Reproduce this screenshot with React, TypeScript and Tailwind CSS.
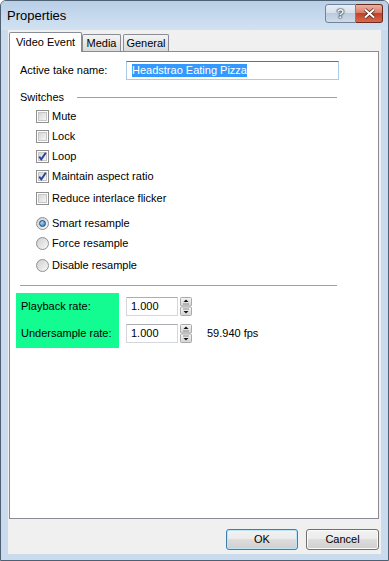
import React from "react";

function CheckBox({ checked }: { checked?: boolean }) {
  return (
    <span className="relative flex h-[13px] w-[13px] shrink-0 items-center justify-center border border-[#8f8f8f] bg-white">
      <span className="h-[9px] w-[9px] border border-[#c6c6c6] bg-linear-to-br from-[#d6d6d6] to-[#f6f6f6]" />
      {checked && (
        <svg className="absolute left-0 top-0" width="11" height="11" viewBox="0 0 11 11">
          <path d="M2.2 5.6 L4.3 8.4 L8.8 1.8" fill="none" stroke="#2a44a0" strokeWidth="1.9" />
        </svg>
      )}
    </span>
  );
}

function Radio({ on }: { on?: boolean }) {
  return (
    <span className="flex h-[13px] w-[13px] shrink-0 items-center justify-center rounded-full border border-[#8f8f8f] bg-linear-to-br from-[#cfcfcf] to-[#f8f8f8]">
      {on && (
        <span className="h-[7px] w-[7px] rounded-full border border-[#1f4f7f] bg-[radial-gradient(circle_at_35%_35%,#a6dcff,#1a6fb4)]" />
      )}
    </span>
  );
}

function Spin() {
  return (
    <svg width="12" height="19" viewBox="0 0 12 19" className="ml-[2px]">
      <defs>
        <linearGradient id="sg" x1="0" y1="0" x2="0" y2="1">
          <stop offset="0" stopColor="#f6f6f6" />
          <stop offset="1" stopColor="#d4d4d4" />
        </linearGradient>
      </defs>
      <rect x="0.5" y="0.5" width="11" height="8.5" rx="1" fill="url(#sg)" stroke="#a9a9a9" />
      <rect x="0.5" y="10" width="11" height="8.5" rx="1" fill="url(#sg)" stroke="#a9a9a9" />
      <polygon points="3.5,5 6,2.5 8.5,5" fill="#111" />
      <rect x="3" y="6.5" width="6" height="1" fill="#8a8a8a" />
      <rect x="3" y="11.5" width="6" height="1" fill="#8a8a8a" />
      <polygon points="3.5,14 8.5,14 6,16.5" fill="#111" />
    </svg>
  );
}

function Row({ children, className = "" }: { children: React.ReactNode; className?: string }) {
  return <div className={`flex h-[20px] items-center pl-[16px] ${className}`}>{children}</div>;
}

export default function App() {
  return (
    <div className="flex h-[561px] w-[389px] flex-col rounded-t-[6px] border border-[#4e6074] bg-[#cadbed] font-['Liberation_Sans',Arial,sans-serif] text-[11px] leading-[13px] text-black">
      {/* title bar */}
      <div className="flex h-[29px] shrink-0 items-start rounded-t-[5px] bg-linear-to-b from-[#b9cfe7] to-[#d2e2f2] pl-[6px] pr-[5px]">
        <span className="mt-[7px] text-[13px] leading-[15px]">Properties</span>
        <div className="ml-auto mt-[3px] flex">
          <div className="flex h-[19px] w-[31px] items-center justify-center rounded-l-[3px] border border-[#6f849c] bg-[linear-gradient(#e6eef6_0%,#d5e0ec_50%,#bccbdc_50%,#cfdbe8_100%)] text-[13px] font-bold text-[#f2f2f2] [text-shadow:0_0_1px_#1e2d3d,0_0_1px_#1e2d3d,0_0_2px_#1e2d3d]">
            ?
          </div>
          <div className="flex h-[19px] w-[27px] items-center justify-center rounded-r-[3px] border border-l-0 border-[#6b2a1d] bg-[linear-gradient(#eab1a2_0%,#d97a62_50%,#c2412a_50%,#d56a4f_100%)]">
            <svg width="13" height="11" viewBox="0 0 13 11">
              <path d="M2 1.5 L11 9.5 M11 1.5 L2 9.5" stroke="#4a1a12" strokeWidth="3.4" />
              <path d="M2 1.5 L11 9.5 M11 1.5 L2 9.5" stroke="#ffffff" strokeWidth="2" />
            </svg>
          </div>
        </div>
      </div>

      {/* client */}
      <div className="mx-[7px] mb-[6px] flex flex-1 flex-col bg-[#f0f0f0]">
        {/* tabs */}
        <div className="flex h-[21px] shrink-0 items-end pl-[1px]">
          <div className="relative z-10 -mb-px flex h-[20px] w-[73px] items-center justify-center rounded-t-[2px] border-x border-t border-[#898c95] bg-white">
            Video Event
          </div>
          <div className="flex h-[17px] w-[39px] items-center justify-center rounded-t-[2px] border-x border-t border-[#898c95] bg-linear-to-b from-[#f4f4f4] to-[#dadada]">
            Media
          </div>
          <div className="ml-[2px] flex h-[17px] w-[46px] items-center justify-center rounded-t-[2px] border-x border-t border-[#898c95] bg-linear-to-b from-[#f4f4f4] to-[#dadada]">
            General
          </div>
        </div>

        {/* panel */}
        <div className="ml-[1px] flex h-[468px] w-[370px] shrink-0 flex-col border border-[#898c95] bg-white pl-[10px]">
          <div className="mt-[9px] flex h-[19px] items-center">
            <span className="w-[106px]">Active take name:</span>
            <div className="flex h-[19px] w-[213px] items-center border border-[#a9cbe5] border-t-[#3d7bad] pl-[5px]">
              <span className="bg-[#3399ff] text-white">Headstrao Eating Pizza</span>
            </div>
          </div>

          <div className="mt-[9px] flex h-[16px] w-[319px] items-center">
            <span className="w-[57px]">Switches</span>
            <span className="mr-[2px] h-px flex-1 bg-[#a0a0a0]" />
          </div>

          <Row className="mt-[1px]">
            <CheckBox />
            <span className="ml-[3px]">Mute</span>
          </Row>
          <Row>
            <CheckBox />
            <span className="ml-[3px]">Lock</span>
          </Row>
          <Row>
            <CheckBox checked />
            <span className="ml-[3px]">Loop</span>
          </Row>
          <Row>
            <CheckBox checked />
            <span className="ml-[3px]">Maintain aspect ratio</span>
          </Row>
          <Row className="mt-[2px]">
            <CheckBox />
            <span className="ml-[3px]">Reduce interlace flicker</span>
          </Row>
          <Row className="mt-[5px]">
            <Radio on />
            <span className="ml-[3px]">Smart resample</span>
          </Row>
          <Row>
            <Radio />
            <span className="ml-[3px]">Force resample</span>
          </Row>
          <Row className="mt-[2px]">
            <Radio />
            <span className="ml-[3px]">Disable resample</span>
          </Row>

          <div className="mt-[10px] h-px w-[317px] bg-[#a0a0a0]" />

          <div className="-ml-[4px] mt-[7px] flex items-start">
            <div className="flex w-[103px] flex-col gap-[8px] bg-[#12fc92] pb-[5px] pl-[5px] pt-[4px]">
              <div className="flex h-[19px] items-center">Playback rate:</div>
              <div className="flex h-[19px] items-center">Undersample rate:</div>
            </div>
            <div className="ml-[7px] flex flex-col gap-[8px] pt-[4px]">
              <div className="flex h-[19px] items-center">
                <div className="flex h-[19px] w-[52px] items-center border border-[#d3d8de] border-t-[#abadb3] pl-[4px]">
                  1.000
                </div>
                <Spin />
              </div>
              <div className="flex h-[19px] items-center">
                <div className="flex h-[19px] w-[52px] items-center border border-[#d3d8de] border-t-[#abadb3] pl-[4px]">
                  1.000
                </div>
                <Spin />
                <span className="ml-[15px]">59.940 fps</span>
              </div>
            </div>
          </div>
        </div>

        {/* footer */}
        <div className="flex justify-end gap-[8px] pr-[2px] pt-[10px]">
          <button className="h-[21px] w-[72px] rounded-[3px] border border-[#3c7fb1] bg-[linear-gradient(#f2f2f2_0%,#ebebeb_50%,#dddddd_50%,#cfcfcf_100%)] shadow-[inset_0_0_0_1px_#bde5f8]">
            OK
          </button>
          <button className="h-[21px] w-[73px] rounded-[3px] border border-[#707070] bg-[linear-gradient(#f2f2f2_0%,#ebebeb_50%,#dddddd_50%,#cfcfcf_100%)] shadow-[inset_0_0_0_1px_#fbfbfb]">
            Cancel
          </button>
        </div>
      </div>
    </div>
  );
}
